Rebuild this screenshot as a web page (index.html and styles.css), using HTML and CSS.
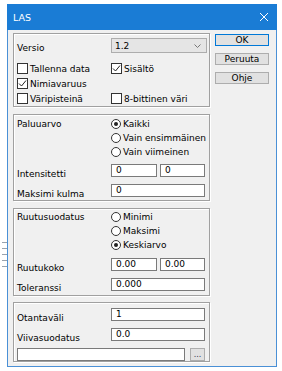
FILE: index.html
```html
<!DOCTYPE html>
<html lang="fi">
<head>
    <meta charset="UTF-8">
    <meta name="viewport" content="width=device-width, initial-scale=1.0">
    <title>LAS</title>
    <link rel="stylesheet" href="styles.css">
</head>
<body>
    <div class="behind"></div>
    <div class="window">
        <div class="titlebar">
            <span class="title">LAS</span>
            <svg class="close" width="10" height="10" viewBox="0 0 10 10">
                <path d="M1 1L9 9M9 1L1 9" stroke="#fff" stroke-width="1" fill="none"/>
            </svg>
        </div>
        <div class="client">
            <div class="main">
                <div class="group g1">
                    <div class="row select-row">
                        <span class="lbl low">Versio</span>
                        <div class="select">
                            <span>1.2</span>
                            <svg width="7" height="4" viewBox="0 0 7 4"><path d="M0.5 0.5L3.5 3.5L6.5 0.5" stroke="#777" fill="none"/></svg>
                        </div>
                    </div>
                    <div class="row check-row">
                        <label class="check"><span class="box"></span>Tallenna data</label>
                        <label class="check"><span class="box"><svg width="9" height="9" viewBox="0 0 9 9"><path d="M1 4.5L3.5 7L8 1.5" stroke="#222" fill="none"/></svg></span>Sisältö</label>
                    </div>
                    <div class="row check-row">
                        <label class="check"><span class="box"><svg width="9" height="9" viewBox="0 0 9 9"><path d="M1 4.5L3.5 7L8 1.5" stroke="#222" fill="none"/></svg></span>Nimiavaruus</label>
                    </div>
                    <div class="row check-row">
                        <label class="check"><span class="box"></span>Väripisteinä</label>
                        <label class="check"><span class="box"></span>8-bittinen väri</label>
                    </div>
                </div>

                <div class="group g2">
                    <div class="row radio-row">
                        <span class="lbl">Paluuarvo</span>
                        <label class="radio"><span class="dot on"></span>Kaikki</label>
                    </div>
                    <div class="row radio-row">
                        <span></span>
                        <label class="radio"><span class="dot"></span>Vain ensimmäinen</label>
                    </div>
                    <div class="row radio-row">
                        <span></span>
                        <label class="radio"><span class="dot"></span>Vain viimeinen</label>
                    </div>
                    <div class="row field-row first">
                        <span class="lbl low">Intensitetti</span>
                        <div class="pair">
                            <div class="input half">0</div>
                            <div class="input half">0</div>
                        </div>
                    </div>
                    <div class="row field-row">
                        <span class="lbl low">Maksimi kulma</span>
                        <div class="input">0</div>
                    </div>
                </div>

                <div class="group g3">
                    <div class="row radio-row">
                        <span class="lbl">Ruutusuodatus</span>
                        <label class="radio"><span class="dot"></span>Minimi</label>
                    </div>
                    <div class="row radio-row">
                        <span></span>
                        <label class="radio"><span class="dot"></span>Maksimi</label>
                    </div>
                    <div class="row radio-row">
                        <span></span>
                        <label class="radio"><span class="dot on"></span>Keskiarvo</label>
                    </div>
                    <div class="row field-row first">
                        <span class="lbl low">Ruutukoko</span>
                        <div class="pair">
                            <div class="input half">0.00</div>
                            <div class="input half">0.00</div>
                        </div>
                    </div>
                    <div class="row field-row">
                        <span class="lbl low">Toleranssi</span>
                        <div class="input">0.000</div>
                    </div>
                </div>

                <div class="group g4">
                    <div class="row field-row">
                        <span class="lbl low">Otantaväli</span>
                        <div class="input">1</div>
                    </div>
                    <div class="row field-row">
                        <span class="lbl low">Viivasuodatus</span>
                        <div class="input">0.0</div>
                    </div>
                    <div class="file-row">
                        <div class="input wide"></div>
                        <button class="browse">...</button>
                    </div>
                </div>
            </div>

            <div class="buttons">
                <button class="btn default">OK</button>
                <button class="btn">Peruuta</button>
                <button class="btn">Ohje</button>
            </div>
        </div>
    </div>
</body>
</html>
```

FILE: styles.css
```css
body {
    margin: 0;
    background-color: #fff;
    font-family: "DejaVu Sans", Verdana, sans-serif;
    font-size: 9px;
    color: #000;
}
.behind {
    position: absolute;
    left: 2px;
    top: 242px;
    width: 5px;
    height: 25px;
    background: repeating-linear-gradient(to bottom, #9aa3ad 0 1px, transparent 1px 6px);
}
.window {
    margin: 4px 0 0 7px;
    width: 270px;
    height: 363px;
    box-sizing: border-box;
    border: 1px solid #4a90d6;
    border-top: none;
    background-color: #f0f0f0;
}
.titlebar {
    height: 26px;
    background-color: #1a7cd5;
    display: flex;
    align-items: center;
    justify-content: space-between;
    padding: 0 8px 0 6px;
    margin: 0 -1px;
}
.title {
    color: #fff;
    font-size: 9.5px;
}
.close {
    display: block;
}
.client {
    display: flex;
    padding: 3px 0 0 5px;
}
.main {
    width: 197px;
}
.group {
    box-sizing: border-box;
    border: 1px solid #a0a0a0;
    box-shadow: 1px 1px 0 #fff, inset 1px 1px 0 #fff;
    padding: 0 2px 0 3px;
}
.g1 {
    height: 74px;
    padding-top: 4px;
    margin-bottom: 7px;
}
.g2 {
    height: 87px;
    padding-top: 2px;
    margin-bottom: 7px;
}
.g3 {
    height: 88px;
    padding-top: 1px;
    margin-bottom: 6px;
}
.g4 {
    height: 60px;
    padding-top: 5px;
}
.row {
    display: grid;
    grid-template-columns: 94px 1fr;
    align-items: start;
}
.select-row {
    height: 15px;
    margin-bottom: 8px;
}
.check-row {
    height: 15px;
    align-items: center;
}
.radio-row {
    height: 14px;
    align-items: center;
}
.field-row {
    height: 13px;
    margin-top: 7px;
}
.g4 .field-row:first-child {
    margin-top: 0;
}
.g2 .field-row.first {
    margin-top: 5px;
}
.g3 .field-row.first {
    margin-top: 6px;
}
.lbl {
    line-height: 10px;
}
.lbl.low {
    padding-top: 5px;
}
.select {
    width: 96px;
    height: 15px;
    box-sizing: border-box;
    border: 1px solid #adadad;
    background-color: #e5e5e5;
    display: flex;
    align-items: center;
    justify-content: space-between;
    padding: 0 5px 0 3px;
}
.check, .radio {
    display: flex;
    align-items: center;
    white-space: nowrap;
}
.box {
    width: 11px;
    height: 11px;
    box-sizing: border-box;
    border: 1px solid #333;
    background-color: #fff;
    margin-right: 2px;
    display: flex;
    align-items: center;
    justify-content: center;
}
.dot {
    width: 10px;
    height: 10px;
    box-sizing: border-box;
    border: 1px solid #333;
    border-radius: 50%;
    background-color: #fff;
    margin-right: 2px;
    display: flex;
    align-items: center;
    justify-content: center;
}
.dot.on::after {
    content: "";
    width: 4px;
    height: 4px;
    border-radius: 50%;
    background-color: #222;
}
.input {
    width: 94px;
    height: 13px;
    box-sizing: border-box;
    border: 1px solid #7a7a7a;
    background-color: #fff;
    padding-left: 4px;
    line-height: 11px;
}
.pair {
    display: flex;
    gap: 3px;
}
.input.half {
    width: 46px;
}
.input.half + .input.half {
    width: 45px;
}
.file-row {
    display: flex;
    gap: 5px;
    margin-top: 7px;
}
.input.wide {
    width: 168px;
}
.browse {
    width: 15px;
    height: 13px;
    box-sizing: border-box;
    border: 1px solid #adadad;
    background-color: #e1e1e1;
    padding: 0;
    font-family: inherit;
    font-size: 8px;
    line-height: 8px;
    color: #335;
}
.buttons {
    display: flex;
    flex-direction: column;
    gap: 7px;
    margin-left: 5px;
    padding-top: 1px;
}
.btn {
    width: 54px;
    height: 12px;
    box-sizing: border-box;
    border: 1px solid #adadad;
    background-color: #e1e1e1;
    padding: 0;
    font-family: inherit;
    font-size: 9px;
    line-height: 10px;
    color: #000;
}
.btn.default {
    border-color: #0078d7;
}
```
